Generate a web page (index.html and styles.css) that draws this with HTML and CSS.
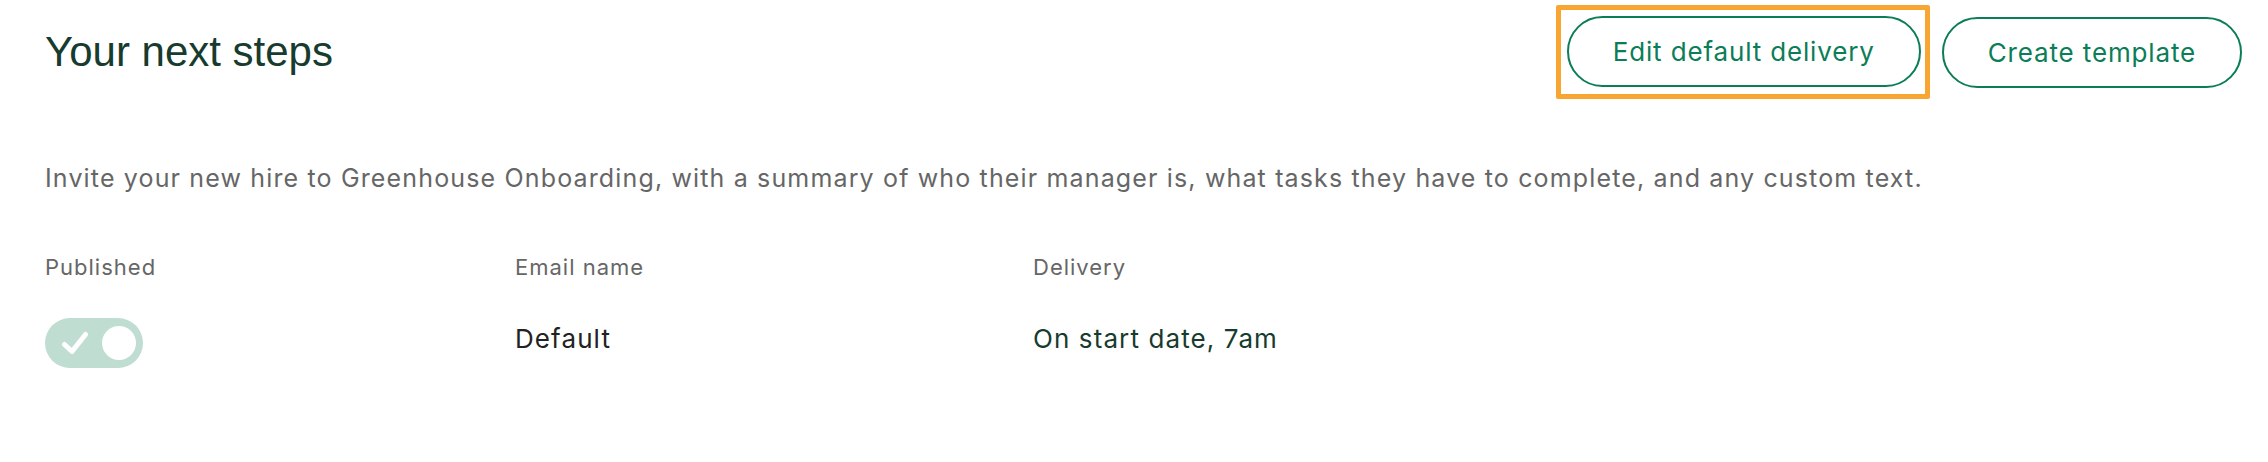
FILE: index.html
```html
<!DOCTYPE html>
<html lang="en">
<head>
  <meta charset="UTF-8" />
  <title>Your next steps</title>
  <link rel="stylesheet" href="styles.css">
</head>
<body>
  <div class="page">
    <header class="top">
      <h1>Your next steps</h1>
      <div class="actions">
        <span class="highlight">
          <button class="btn">Edit default delivery</button>
        </span>
        <button class="btn">Create template</button>
      </div>
    </header>

    <p class="intro">Invite your new hire to Greenhouse Onboarding, with a summary of who their manager is, what tasks they have to complete, and any custom text.</p>

    <div class="table">
      <div class="th">Published</div>
      <div class="th">Email name</div>
      <div class="th">Delivery</div>

      <div class="td">
        <span class="toggle">
          <svg class="check" width="28" height="24" viewBox="0 0 28 24">
            <path d="M3.5 13.5 L11 20.5 L24.5 3.5" fill="none" stroke="#fff" stroke-width="5" stroke-linecap="round" stroke-linejoin="round"/>
          </svg>
          <span class="knob"></span>
        </span>
      </div>
      <div class="td text name">Default</div>
      <div class="td text delivery">On start date, 7am</div>
    </div>
  </div>
</body>
</html>
```

FILE: styles.css
```css
body { margin: 0; background: #fff; font-family: Inter, Roboto, "Liberation Sans", sans-serif; }
.page { padding: 5px 26px 0 45px; }

.top { display: flex; justify-content: space-between; align-items: center; }
.top h1 { margin: 0; font-family: "Liberation Sans", Arial, sans-serif; font-weight: normal; font-size: 42px; color: #173b2e; }
.actions { display: flex; align-items: center; gap: 12px; }
.highlight { display: block; border: 5px solid #f9a532; border-radius: 2px; padding: 6px 4px 7px 6px; }
.btn {
  display: block;
  height: 71px;
  padding: 0 44px;
  background: #fff;
  border: 2px solid #0b7d58;
  border-radius: 36px;
  color: #0b7d58;
  font-family: inherit;
  letter-spacing: 0.85px;
  font-size: 26px;
}

.intro { margin: 62px 0 0; font-size: 25px; line-height: 34px; letter-spacing: 1.15px; color: #666; }

.table { display: grid; grid-template-columns: 470px 518px 1fr; margin-top: 57px; }
.th { font-size: 22px; line-height: 30px; letter-spacing: 1px; color: #666; }
.td { margin-top: 35px; display: flex; align-items: center; height: 51px; font-size: 26px; }
.text { padding-bottom: 8px; box-sizing: border-box; }
.name { color: #222; letter-spacing: 1.1px; }
.delivery { color: #173b2e; letter-spacing: 1.1px; }

.toggle { display: flex; align-items: center; justify-content: space-between; width: 98px; height: 50px; padding: 0 7px 0 16px; box-sizing: border-box; background: #c0ddd1; border-radius: 25px; }
.knob { width: 34px; height: 34px; border-radius: 50%; background: #fff; }
```
